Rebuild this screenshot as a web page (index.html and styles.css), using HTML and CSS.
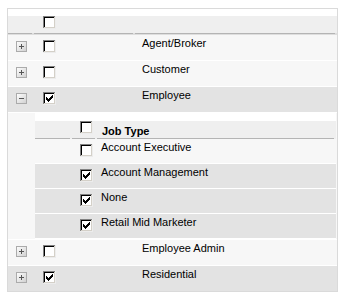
FILE: index.html
```html
<!DOCTYPE html>
<html>
<head>
<meta charset="utf-8">
<link rel="stylesheet" href="styles.css">
</head>
<body>
<svg class="defs" aria-hidden="true">
  <defs>
    <linearGradient id="eg" x1="0" y1="0" x2="1" y2="1">
      <stop offset="0" stop-color="#ffffff"/>
      <stop offset="1" stop-color="#cfcfcf"/>
    </linearGradient>
    <symbol id="cb" viewBox="0 0 13 13">
      <path fill="#ececec" d="M0 0h13v13H0z"/>
      <path fill="#808080" d="M0 0h12v1H1v11H0z"/>
      <path fill="#d4d0c8" d="M1 1h11v11H1z"/>
      <path fill="#000" d="M1 1h10v1H2v9H1z"/>
      <path fill="#fff" d="M2 2h9v9H2z"/>
    </symbol>
    <symbol id="cbon" viewBox="0 0 13 13">
      <path fill="#ececec" d="M0 0h13v13H0z"/>
      <path fill="#808080" d="M0 0h12v1H1v11H0z"/>
      <path fill="#d4d0c8" d="M1 1h11v11H1z"/>
      <path fill="#000" d="M1 1h10v1H2v9H1z"/>
      <path fill="#fff" d="M2 2h9v9H2z"/>
      <path fill="#000" d="M3 5h1v3H3zM4 6h1v3H4zM5 7h1v3H5zM6 6h1v3H6zM7 5h1v3H7zM8 4h1v3H8zM9 3h1v3H9z"/>
    </symbol>
    <symbol id="plus" viewBox="0 0 11 11">
      <rect x="0.5" y="0.5" width="10" height="10" fill="url(#eg)" stroke="#ababab"/>
      <path fill="#555" d="M3 5h5v1H3zM5 3h1v5H5z"/>
    </symbol>
    <symbol id="minus" viewBox="0 0 11 11">
      <rect x="0.5" y="0.5" width="10" height="10" fill="url(#eg)" stroke="#ababab"/>
      <path fill="#555" d="M3 5h5v1H3z"/>
    </symbol>
  </defs>
</svg>

<div class="grid">
  <div class="row head">
    <div class="exp"></div>
    <div class="chk"><svg class="cbx"><use href="#cb"/></svg></div>
    <div class="txt"></div>
  </div>

  <div class="row">
    <div class="exp"><svg class="ex"><use href="#plus"/></svg></div>
    <div class="chk"><svg class="cbx"><use href="#cb"/></svg></div>
    <div class="txt">Agent/Broker</div>
  </div>
  <div class="row">
    <div class="exp"><svg class="ex"><use href="#plus"/></svg></div>
    <div class="chk"><svg class="cbx"><use href="#cb"/></svg></div>
    <div class="txt">Customer</div>
  </div>
  <div class="row alt">
    <div class="exp"><svg class="ex"><use href="#minus"/></svg></div>
    <div class="chk"><svg class="cbx"><use href="#cbon"/></svg></div>
    <div class="txt">Employee</div>
  </div>

  <div class="nest">
    <div class="sub">
      <div class="srow shead">
        <div class="pad"></div>
        <div class="chk"><svg class="cbx"><use href="#cb"/></svg></div>
        <div class="txt">Job Type</div>
      </div>
      <div class="srow">
        <div class="pad"></div>
        <div class="chk"><svg class="cbx"><use href="#cb"/></svg></div>
        <div class="txt">Account Executive</div>
      </div>
      <div class="srow alt">
        <div class="pad"></div>
        <div class="chk"><svg class="cbx"><use href="#cbon"/></svg></div>
        <div class="txt">Account Management</div>
      </div>
      <div class="srow alt">
        <div class="pad"></div>
        <div class="chk"><svg class="cbx"><use href="#cbon"/></svg></div>
        <div class="txt">None</div>
      </div>
      <div class="srow alt">
        <div class="pad"></div>
        <div class="chk"><svg class="cbx"><use href="#cbon"/></svg></div>
        <div class="txt">Retail Mid Marketer</div>
      </div>
    </div>
  </div>

  <div class="row">
    <div class="exp"><svg class="ex"><use href="#plus"/></svg></div>
    <div class="chk"><svg class="cbx"><use href="#cb"/></svg></div>
    <div class="txt">Employee Admin</div>
  </div>
  <div class="row alt last">
    <div class="exp"><svg class="ex"><use href="#plus"/></svg></div>
    <div class="chk"><svg class="cbx"><use href="#cbon"/></svg></div>
    <div class="txt">Residential</div>
  </div>
</div>
</body>
</html>
```

FILE: styles.css
```css
* {
  box-sizing: border-box;
}

body {
  margin: 0;
  background: #fff;
  color: #000;
  font: 11px/13px "Liberation Sans", Arial, sans-serif;
}

.defs {
  position: absolute;
  width: 0;
  height: 0;
  overflow: hidden;
}

.grid {
  margin: 8px 0 0 7px;
  width: 331px;
  border: 1px solid #dadada;
}

.row {
  display: grid;
  grid-template-columns: 26px 101px 202px;
  height: 26px;
  border-bottom: 1px solid #fff;
  background: #f7f7f7;
}

.row.alt {
  background: #e3e3e3;
}

.row.last {
  height: 25px;
  border-bottom: 0;
}

.row.head {
  border-bottom: 0;
  background: none;
}

.row.head > div {
  background:
    linear-gradient(#b4b4b4, #b4b4b4) 0 24px / calc(100% - 2px) 1px no-repeat,
    linear-gradient(#ffffff 0 7px, #efefef 7px 24px, #dedede 24px 26px);
}

.exp {
  padding: 6px 0 0 8px;
}

.chk {
  padding: 5px 0 0 9px;
}

.head .chk {
  padding-top: 7px;
}

.txt {
  padding: 2px 0 0 7px;
  white-space: nowrap;
}

.ex {
  display: block;
  width: 11px;
  height: 11px;
}

.cbx {
  display: block;
  width: 13px;
  height: 13px;
}

.nest {
  padding: 0 1px 0 27px;
  border-bottom: 1px solid #fff;
  background: #f7f7f7;
}

.sub {
  width: 301px;
}

.srow {
  display: grid;
  grid-template-columns: 37px 25px 239px;
  height: 25px;
  border-bottom: 1px solid #fff;
  background: #f7f7f7;
}

.srow.alt {
  background: #e3e3e3;
}

.srow .chk {
  padding: 5px 0 0 8px;
}

.srow .txt {
  padding: 2px 0 0 4px;
}

.srow.shead {
  height: 26px;
  border-bottom: 0;
  background: none;
}

.srow.shead > div {
  background:
    linear-gradient(#b4b4b4, #b4b4b4) 0 25px / calc(100% - 2px) 1px no-repeat,
    linear-gradient(#ffffff 0 8px, #efefef 8px 25px);
}

.srow.shead .chk {
  padding-top: 8px;
}

.srow.shead .txt {
  padding: 12px 0 0 5px;
  font-weight: bold;
}
```
